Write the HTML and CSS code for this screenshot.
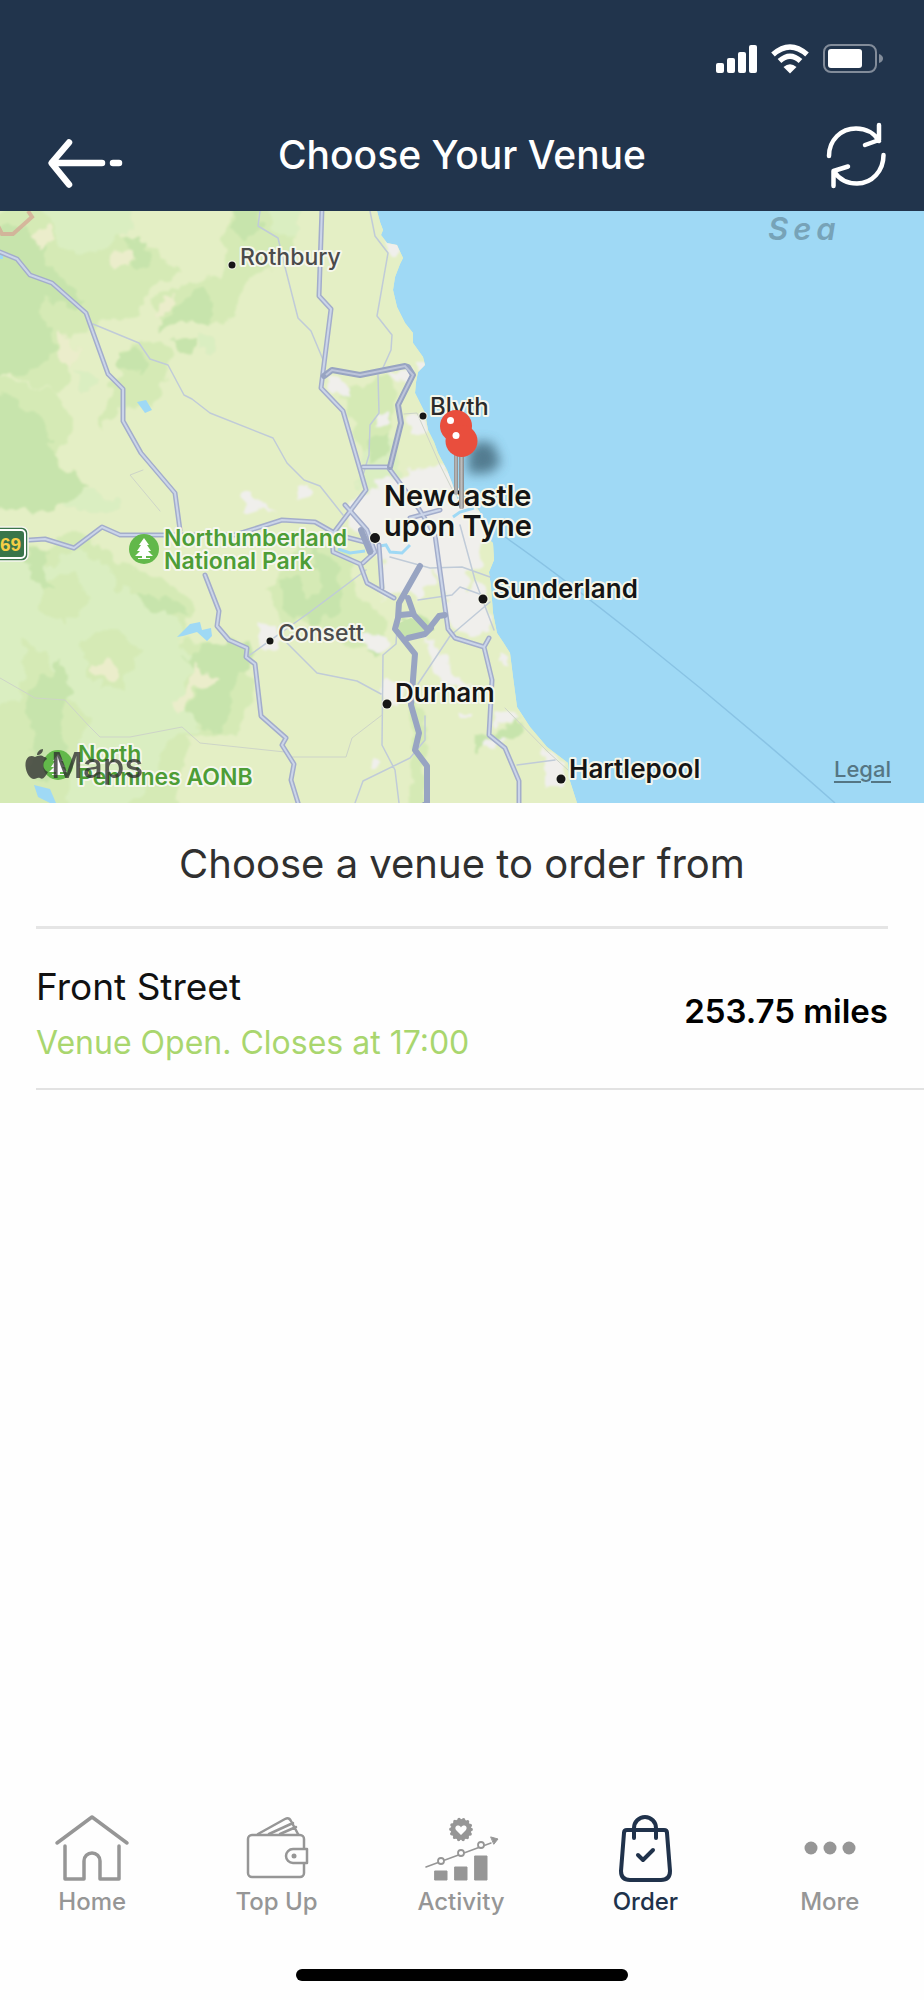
FILE: index.html
```html
<!DOCTYPE html>
<html lang="en">
<head>
<meta charset="utf-8">
<meta name="viewport" content="width=device-width, initial-scale=1">
<title>Choose Your Venue</title>
<link rel="stylesheet" href="styles.css">
</head>
<body>
<div class="app">
  <header class="header">
    <div class="status" aria-hidden="true">
      <svg class="status-signal" viewBox="0 0 41 28"><rect x="0" y="18" width="8" height="10" rx="2"/><rect x="11" y="13" width="8" height="15" rx="2"/><rect x="22" y="7" width="8" height="21" rx="2"/><rect x="33" y="0" width="8" height="28" rx="2"/></svg>
      <svg class="status-wifi" viewBox="0 0 40 30"><path d="M3 10.500Q20 -4.500 37 10.500M9.500 17Q20 7.500 30.500 17" fill="none" stroke="#fff" stroke-width="5.500"/><path d="M13.500 23Q20 17.500 26.500 23L20 29.500Z"/></svg>
      <svg class="status-battery" viewBox="0 0 61 30"><rect x="1" y="1" width="52" height="27" rx="7" fill="none" stroke="#828c9a" stroke-width="2"/><rect x="5" y="5" width="34" height="19" rx="3"/><path d="M56 10q4 1.500 4 4.500t-4 4.500Z" fill="#828c9a"/></svg>
    </div>
    <div class="nav">
      <button class="nav-button" type="button" aria-label="Back">
        <svg class="nav-icon" viewBox="0 0 80 80"><path d="M33 27.500 15.500 48 33 69.500M17 48H66M77 48H83" fill="none" stroke="#fff" stroke-width="6.500" stroke-linecap="round" stroke-linejoin="round"/></svg>
      </button>
      <h1 class="title">Choose Your Venue</h1>
      <button class="nav-button" type="button" aria-label="Refresh">
        <svg class="nav-icon" viewBox="0 0 80 80"><path d="M21 41C21 25 33 13.500 48 13.500C59 13.500 67 19 71 26M71 10V25L57 30M75.500 40C75.500 56 64 68.500 49 68.500C39 68.500 31 64 26 56.500M25.500 71V56L40 51.500" fill="none" stroke="#fff" stroke-width="4.500" stroke-linecap="round" stroke-linejoin="round"/></svg>
      </button>
    </div>
  </header>

  <section class="map" aria-label="Map of venues">
    <svg class="map-canvas" viewBox="0 211 924 592" preserveAspectRatio="xMidYMid slice">
      <defs>
        <filter id="soft" x="-50%" y="-50%" width="200%" height="200%"><feGaussianBlur stdDeviation="6"/></filter>
        <filter id="rough" x="0" y="0" width="100%" height="100%"><feTurbulence type="fractalNoise" baseFrequency=".07" numOctaves="2" seed="4"/><feDisplacementMap in="SourceGraphic" scale="18" xChannelSelector="R" yChannelSelector="G"/><feGaussianBlur stdDeviation=".8"/></filter>
        <clipPath id="shore"><path d="M0 211H377L380 222 383 230 381 235 387 243 397 245 403 258 400 264 395 277 393 290 397 307 405 323 413 333 413 343 423 357 425 365 418 372 416 382 415 393 425 413 428 430 434 442 438 453 447 470 452 483 460 507 474 503 485 520 486 537 493 543 494 560 489 572 491 587 493 613 497 633 503 642 510 653 513 677 517 707 530 727 547 747 568 763 569 778 577 803H0Z"/></clipPath>
        <linearGradient id="needle"><stop offset="0" stop-color="#8c8c8c"/><stop offset=".5" stop-color="#bdbdbd"/><stop offset="1" stop-color="#858585"/></linearGradient>
        <g id="tree"><circle r="15" fill="#62b84a"/><path d="M0-11 5-4H3L7 2H4L9 7H2V9H6V10H-6V9H-2V7H-9L-4 2H-7L-3-4H-5Z" fill="#fff"/></g>
      </defs>
      <rect y="211" width="924" height="592" fill="#9fd9f5"/>
      <g clip-path="url(#shore)">
      <rect y="211" width="600" height="592" fill="#e4efc5"/>
      <g filter="url(#rough)">
      <rect x="-20" y="191" width="640" height="632" fill="#e4efc5"/>
      <g fill="#d5eab5">
        <path d="M-20 225 40 190H128L123 240 160 250 180 275 150 285 138 315 100 322 90 330 62 345 70 380 60 395 -20 365Z"/>
        <path d="M225 225 240 190H300L290 262 250 280 230 318 224 325 190 318 165 325 150 300 185 285 222 275Z"/>
        <path d="M120 350 150 338 175 352 165 378 155 405 120 412 100 430 110 385 122 375Z"/>
        <path d="M-20 370 60 395 75 430 55 455 72 475 75 500 -20 508Z"/>
        <path d="M-20 545 45 548 82 530 115 560 170 585 195 600 182 640 235 650 255 690 237 733 190 735 170 820H-20Z"/>
        <path d="M305 540 345 550 360 600 390 620 382 650 345 645 320 625 280 620 270 590Z"/>
        <path d="M410 690 428 720 424 765 428 820H412Z"/>
        <path d="M340 390 390 375 398 400 386 450 365 460 355 435Z"/>
      </g>
      <g fill="#daeec1">
        <path d="M30 190H135L130 235 110 242 105 251 60 250 55 230Z"/>
        <path d="M270 190H300V230L290 240 270 230ZM195 330 217 340 215 355 200 350ZM75 370 100 375 98 385 82 390Z"/>
        <path d="M-20 560 30 558 50 570 70 550 100 560 140 600 180 620 185 650 205 660 185 680 180 700 200 730 165 740 160 770 115 820H65L75 750 90 720 60 690 45 650 25 640 20 700 -20 710Z"/>
        <path d="M60 495 90 490 120 503 120 511H65Z"/>
        <path d="M370 440 395 440 400 475 385 490 355 485Z"/>
      </g>
      <g fill="#d5eab5"><path d="M40 580 75 572 90 600 65 625 40 610ZM80 640 115 630 140 650 120 690 90 680ZM105 570 135 580 120 592Z"/></g>
      <g fill="#c7e4ac">
        <path d="M-20 225 25 225 45 245 48 265 85 300 72 305 45 300 40 315 50 330 55 350 35 370 20 375 -20 378Z"/>
        <path d="M-20 390 20 395 18 405 45 420 55 440 50 450 62 465 88 485 75 500 55 510 -20 512Z"/>
        <path d="M130 238 140 240 152 260 150 266 138 268 133 255 125 243ZM232 190H258L260 230 245 240 230 228ZM175 305 200 290 213 303 213 322 200 324 190 320 175 325 160 328 172 315ZM120 352 135 345 145 358 145 372 120 368ZM172 340 195 335 196 355 178 350Z"/>
        <path d="M28 550 50 548 45 575 55 590 35 585 30 570ZM137 595 150 595 160 600 170 598 188 615 175 615 150 612ZM37 675 50 680 60 660 70 690 63 710 65 760 50 780 28 775 35 735 22 710Z"/>
        <path d="M190 650 235 640 255 650 250 665 230 690 236 710 225 720 220 732 195 725 184 710 200 690 196 670 185 660ZM280 580 300 575 310 610 295 620 280 607Z"/>
        <path d="M310 545 340 563 338 610 310 625 300 605 320 590ZM370 640 380 635 382 652 368 655ZM472 733 500 730 524 720 520 732 485 745 482 752Z"/>
        <path d="M368 440 390 435 385 455 370 460ZM400 615 430 622 435 630 415 637Z"/>
      </g>
      <g fill="#ebedcb"><path d="M30 232 50 228 55 240 40 250ZM110 250 130 248 135 262 115 268ZM155 315 162 300 174 298 172 310 158 322ZM62 330 70 345 78 350 68 368 56 352ZM90 665 105 662 122 672 115 682 95 675ZM195 664 203 675 220 680 195 690 182 710 174 700 190 685Z"/></g>
      <g fill="#f0efec">
        <path d="M345 510 365 490 395 478 425 466 447 470 470 500 490 520 482 540 478 558 488 600 492 630 470 635 456 630 448 615 437 570 420 600 400 590 385 600 382 560 365 545 350 530Z"/>
        <path d="M324 380 345 382 346 395 335 396ZM387 375 412 368 412 385 395 382ZM244 492 250 488 258 502 274 511 242 510ZM296 488 310 480 308 495 298 500ZM402 413 420 414 427 430 420 434 404 424ZM375 425 380 415 390 412 392 422ZM258 622 272 624 278 645 262 647ZM418 362 430 362 418 374ZM385 241 402 243 404 252 390 252ZM360 633 382 635 392 640 384 650 366 650ZM382 683 400 683 400 705 382 700ZM425 635 440 650 455 675 475 685 445 685 432 660ZM460 712 470 712 472 718 462 718ZM492 715 510 706 523 722 495 726ZM482 738 503 740 495 749 484 746ZM540 745 566 763 560 785 545 790 545 765ZM375 755 384 760 378 770 372 767ZM500 655 508 655 507 665 500 662Z"/>
        <path d="M468 568H486V586H468Z" fill="#e4efc5"/>
      </g>
      </g>
      </g>
      <path d="M411 618 435 630 416 638 402 636 397 624Z" fill="#c7e4ac"/>
      <g fill="#9fd9f5">
        <path d="M137 402 146 400 152 410 145 413Z"/><path d="M177 637 190 624 200 622 202 630 211 628 212 636 207 641 197 632 183 636Z"/><path d="M34 785 50 789 56 803H50L38 797Z"/><path d="M0 255H3V259H0Z"/>
      </g>
      <path d="M338 549 350 553 365 551M380 546 386 545 390 552 402 553 410 545M453 517 460 512 474 508" fill="none" stroke="#9fd9f5" stroke-width="3"/>
      <path d="M505 537C560 575 690 675 835 803" fill="none" stroke="#89c3e4" stroke-width="1.500"/>
      <g class="minor">
        <path d="M93 324 139 343 150 359 168 365 184 395 192 399 210 413 273 438 287 463 304 480 320 486 343 515"/>
        <path d="M260 211 258 226 278 238 285 267 298 318 311 331 324 362"/>
        <path d="M370 211 375 236 388 253 377 316 392 335 391 350 382 370M378 375 379 413 370 425 369 455 363 475"/>
        <path d="M247 657 310 612 366 570M287 643 317 673 357 681 381 694M397 628 396 644 383 655 382 745 395 770 399 803M418 684 450 636 490 602M418 600 452 595 460 587 485 596M355 803 363 781 410 758 425 740 425 716M460 525 475 580 494 630M517 765 555 760M390 557 430 568 462 567 490 577"/>
      </g>
      <g class="track"><path d="M290 757H346L352 738 382 715M160 511 130 475 143 470M0 678 35 698 65 700 88 725 100 737H130L182 727 200 743 285 752M404 414 417 413 440 465 455 495M505 708 548 752 568 770"/></g>
      <path d="M28 211 32 217 13 234H2L-2 226" fill="none" stroke="#d5a594" stroke-width="4" opacity=".75"/>
      <g class="road-edge">
        <path d="M0 252 17 259 30 275 52 283 86 313 108 374 123 389V421L141 453 175 493 180 530"/>
        <path d="M0 542 45 539 74 548 102 527 120 535H235L282 520 315 522 338 535 365 542"/><path d="M205 575 219 611 217 626 229 640 247 648 246 657 255 664 261 716 286 738 282 745 294 764 291 780 299 806"/>
        <path d="M322 208 319 296 331 309 321 388 343 411 366 490 332 535 333 552 360 564 367 583 394 598"/>
        <path d="M363 467H388L419 509 435 535 448 629 455 638 484 647 492 680 489 735 505 748 519 781V803M484 647 489 638M379 545 382 588M363 563 375 552 367 530 345 505M410 518 440 510"/>
      </g>
      <g class="road">
        <path d="M0 252 17 259 30 275 52 283 86 313 108 374 123 389V421L141 453 175 493 180 530"/>
        <path d="M0 542 45 539 74 548 102 527 120 535H235L282 520 315 522 338 535 365 542"/><path d="M205 575 219 611 217 626 229 640 247 648 246 657 255 664 261 716 286 738 282 745 294 764 291 780 299 806"/>
        <path d="M322 208 319 296 331 309 321 388 343 411 366 490 332 535 333 552 360 564 367 583 394 598"/>
        <path d="M363 467H388L419 509 435 535 448 629 455 638 484 647 492 680 489 735 505 748 519 781V803M484 647 489 638M379 545 382 588M363 563 375 552 367 530 345 505M410 518 440 510"/>
      </g>
      <g class="motorway"><path d="M324 376 332 370 360 375 405 366 408 367 413 375 398 405 401 423 390 467M361 530 370 552M420 566 399 603 398 618 395 629 415 654 411 705 419 733 415 750 427 766V803L420 808M408 598 414 615 428 630 439 616 445 615M400 615 411 614M408 638 425 634 431 628"/></g>
      <path d="M326 375 332 370 360 375 405 366 413 375 398 405 401 423 390 467" fill="none" stroke="#bdc5da" stroke-width="2"/>

      <g class="dots"><circle cx="232" cy="265" r="3.500"/><circle cx="423" cy="416" r="3.500"/><circle cx="375" cy="538" r="5"/><circle cx="483" cy="599" r="4.500"/><circle cx="270" cy="641" r="3.500"/><circle cx="387" cy="704" r="4.500"/><circle cx="561" cy="779" r="4.500"/></g>
      <g class="label town"><text x="240" y="265">Rothbury</text><text x="278" y="641">Consett</text></g>
      <text class="label coast" x="430" y="415">Blyth</text>
      <g class="label city"><text x="384" y="506">Newcastle</text><text x="384" y="536">upon Tyne</text></g>
      <g class="label major"><text x="493" y="598">Sunderland</text><text x="395" y="702">Durham</text><text x="569" y="778">Hartlepool</text></g>
      <g class="label park"><text x="164" y="546">Northumberland</text><text x="164" y="569">National Park</text><text x="78" y="762">North</text><text x="78" y="785">Pennines AONB</text></g>
      <use href="#tree" x="144" y="549"/><use href="#tree" x="58" y="765"/>
      <text class="sea" x="768" y="240">Sea</text>
      <rect x="-20" y="527" width="48" height="34" rx="6" fill="#39754a" stroke="#f4f5ed" stroke-width="1.500"/>
      <rect x="-20" y="530" width="45" height="28" rx="4" fill="none" stroke="#fff" stroke-width="2"/>
      <text class="route" x="0" y="551">69</text>

      <path d="M468 450 478 441 493 443 501 463 490 473 468 474Z" fill="#3f6577" opacity=".8" filter="url(#soft)"/>
      <rect x="454" y="440" width="4" height="55" rx="2" fill="url(#needle)"/>
      <rect x="459" y="450" width="5" height="59" rx="2" fill="url(#needle)"/>
      <circle cx="456" cy="426" r="16" fill="#e94e3d"/><circle cx="461.500" cy="441" r="16" fill="#e94e3d"/><circle cx="450.500" cy="420.500" r="3.500" fill="#fff"/><circle cx="456" cy="435.500" r="3.500" fill="#fff"/>
      <g class="brand"><path d="M44 757C41 754 37 756 35 757C29 754 25 759 25.500 766C26 773 30 779 34 779C36 779 37 777 40 778C43 780 45 777 48 772C42 769 42 762 47 759C46 757 45 757 44 757ZM37 755C37 752 40 749 43 749C43 753 40 755 37 755Z"/><text x="51" y="778">Maps</text></g>
    </svg>
    <a class="legal" href="#legal">Legal</a>
  </section>

  <main class="venues">
    <h2 class="heading">Choose a venue to order from</h2>
    <ul class="venue-list">
      <li class="venue">
        <a class="venue-link" href="#front-street">
          <span class="venue-info"><span class="venue-name">Front Street</span><span class="venue-status">Venue Open. Closes at 17:00</span></span>
          <span class="venue-distance">253.75 miles</span>
        </a>
      </li>
    </ul>
  </main>

  <nav class="tabs" aria-label="Main">
    <a class="tab" href="#home"><svg class="tab-icon" viewBox="0 0 76 70"><path d="M3 30 38 4 73 30M11 33V66H30V48a8 8 0 0 1 16 0V66H65V33" stroke-width="3.500"/></svg>Home</a>
    <a class="tab" href="#top-up"><svg class="tab-icon" viewBox="0 0 76 70"><g stroke-width="2.500"><rect x="9" y="22" width="56" height="42" rx="4"/><path d="M19 21 46 6Q50 4 52 8L59 21M30 21 54 10M41 21 57 14"/><path d="M68 36V50H54a7 7 0 0 1 0-14Z" fill="#fefefe"/></g><circle cx="55" cy="43" r="2.500" fill="currentColor" stroke="none"/></svg>Top Up</a>
    <a class="tab" href="#activity"><svg class="tab-icon" viewBox="0 0 76 70"><circle cx="38" cy="16.500" r="10.500" fill="currentColor" stroke="none"/><circle cx="38" cy="16.500" r="10.200" stroke-width="3.400" stroke-dasharray="0 4.578"/><path d="M38 22 33 17C30.500 13 36 10.500 38 14.500C40 10.500 45.500 13 43 17Z" fill="#fefefe" stroke="none"/><path d="M3 54 68 30" stroke-width="1.500"/><g fill="#fefefe" stroke-width="1.800"><circle cx="18" cy="48" r="3"/><circle cx="38" cy="40" r="3"/><circle cx="58" cy="32" r="3"/></g><path d="M68 24 75 26 71 31ZM12 58H24V67H12ZM32 54H44V67H32ZM52 43H64V67H52Z" fill="currentColor" stroke-width="1"/></svg>Activity</a>
    <a class="tab tab-active" href="#order" aria-current="page"><svg class="tab-icon" viewBox="0 0 76 70"><path d="M20 17H57Q60 17 60 20L63 58Q63 67 54 67H23Q14 67 14 58L17 20Q17 17 20 17ZM27 25V15a11 11 0 0 1 22 0V25M31 42 36 47 46 37" stroke-width="4"/></svg>Order</a>
    <a class="tab" href="#more"><svg class="tab-icon" viewBox="0 0 76 70"><g fill="currentColor" stroke="none"><circle cx="19" cy="35" r="6.500"/><circle cx="38" cy="35" r="6.500"/><circle cx="57" cy="35" r="6.500"/></g></svg>More</a>
  </nav>
  <div class="home-indicator"></div>
</div>
</body>
</html>
```
FILE: styles.css
```css
* { box-sizing: border-box; }
body { margin: 0; background: #fefefe; color: #111; font-family: Inter, "Liberation Sans", sans-serif; }
a { color: inherit; text-decoration: none; }
.app { min-height: 100vh; display: flex; flex-direction: column; }

.header { background: #21344c; color: #fff; padding: 44px 36px 16px; }
.status { display: flex; justify-content: flex-end; gap: 13px; padding-right: 4px; fill: #fff; }
.status svg { height: 30px; display: block; }
.status-signal { width: 41px; }
.status-wifi { width: 40px; }
.status-battery { width: 61px; }
.nav { display: grid; grid-template-columns: 80px 1fr 80px; align-items: center; padding-top: 41px; }
.nav-button { border: 0; padding: 0; background: none; cursor: pointer; }
.nav-icon { display: block; width: 80px; height: 80px; overflow: visible; }
.title { margin: 0; text-align: center; font-size: 39px; line-height: 48px; font-weight: 500; }

.map { position: relative; }
.map-canvas { display: block; width: 100%; }
.legal { position: absolute; right: 33px; bottom: 20px; font-size: 22px; line-height: 28px; font-weight: 500; color: #557684; text-decoration: underline; text-underline-offset: 4px; text-decoration-thickness: 2px; text-decoration-skip-ink: auto; }
.minor, .track, .road, .road-edge, .motorway { fill: none; stroke-linejoin: round; stroke-linecap: round; }
.minor { stroke: #c0cbd8; stroke-width: 1.5px; }
.track { stroke: #cdd4c8; stroke-width: 1px; }
.road-edge { stroke: #a3adcb; stroke-width: 5px; }
.road { stroke: #cbd5e9; stroke-width: 2px; }
.motorway { stroke: #98a4c2; stroke-width: 6px; }
.dots { fill: #161616; stroke: #f4f6ea; stroke-width: 2px; paint-order: stroke; }
.label { paint-order: stroke; stroke: #f5f7ec; stroke-width: 4px; stroke-linejoin: round; fill: #151515; }
.town { font-size: 23px; font-weight: 500; fill: #4b4b4b; }
.coast { font-size: 24px; font-weight: 500; fill: #2b2b2b; }
.city { font-size: 29px; font-weight: 600; }
.major { font-size: 26px; font-weight: 600; }
.park { font-size: 23px; font-weight: 600; fill: #4d9d36; }
.sea { font-size: 31px; font-weight: 600; font-style: italic; letter-spacing: 5px; fill: #77a3b8; }
.route { font-size: 19px; font-weight: 600; fill: #f6ce46; font-family: "Liberation Sans", sans-serif; }
.brand { fill: #303030; opacity: .78; font-size: 35px; font-weight: 500; }

.venues { flex: 1; padding-left: 36px; }
.heading { margin: 0 36px 0 0; padding: 33px 0 35px; border-bottom: 3px solid #e5e5e5; text-align: center; color: #303030; font-size: 40px; line-height: 55px; font-weight: 400; }
.venue-list { list-style: none; margin: 0; padding: 0; }
.venue { border-bottom: 2px solid #e2e2e2; }
.venue-link { display: flex; align-items: flex-start; justify-content: space-between; padding: 34px 36px 24px 0; }
.venue-info { display: flex; flex-direction: column; gap: 10px; }
.venue-name { font-size: 37px; line-height: 48px; }
.venue-status { font-size: 32px; line-height: 43px; color: #a9d66e; }
.venue-distance { padding-top: 28px; font-size: 33px; line-height: 40px; font-weight: 600; color: #000; }

.tabs { display: grid; grid-template-columns: repeat(5, 1fr); padding: 0 2px 51px 0; }
.tab { display: flex; flex-direction: column; align-items: center; gap: 3px; font-size: 24px; line-height: 32px; font-weight: 500; color: #969696; }
.tab-active { color: #20324b; }
.tab-icon { width: 76px; height: 70px; fill: none; stroke: currentColor; stroke-linecap: round; stroke-linejoin: round; }
.home-indicator { align-self: center; width: 36%; height: 12px; margin-bottom: 19px; border-radius: 6px; background: #000; }
```
